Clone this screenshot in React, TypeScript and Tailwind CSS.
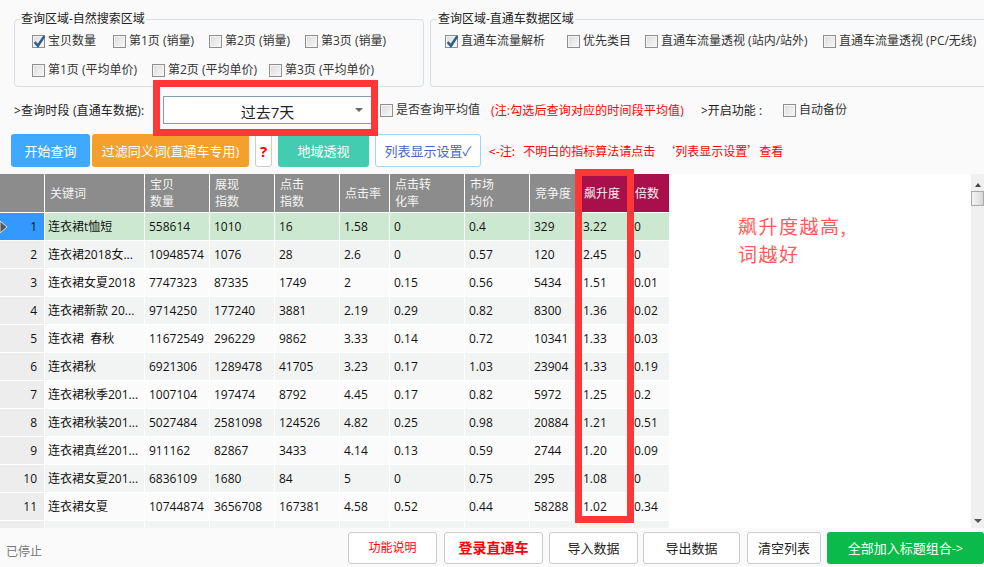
import type { ReactNode } from 'react'

const rows = [
  ['1', '连衣裙t恤短', '558614', '1010', '16', '1.58', '0', '0.4', '329', '3.22', '0'],
  ['2', '连衣裙2018女...', '10948574', '1076', '28', '2.6', '0', '0.57', '120', '2.45', '0'],
  ['3', '连衣裙女夏2018', '7747323', '87335', '1749', '2', '0.15', '0.56', '5434', '1.51', '0.01'],
  ['4', '连衣裙新款 20...', '9714250', '177240', '3881', '2.19', '0.29', '0.82', '8300', '1.36', '0.02'],
  ['5', '连衣裙  春秋', '11672549', '296229', '9862', '3.33', '0.14', '0.72', '10341', '1.33', '0.03'],
  ['6', '连衣裙秋', '6921306', '1289478', '41705', '3.23', '0.17', '1.03', '23904', '1.33', '0.19'],
  ['7', '连衣裙秋季201...', '1007104', '197474', '8792', '4.45', '0.17', '0.82', '5972', '1.25', '0.2'],
  ['8', '连衣裙秋装201...', '5027484', '2581098', '124526', '4.82', '0.25', '0.98', '20884', '1.21', '0.51'],
  ['9', '连衣裙真丝201...', '911162', '82867', '3433', '4.14', '0.13', '0.59', '2744', '1.20', '0.09'],
  ['10', '连衣裙女夏201...', '6836109', '1680', '84', '5', '0', '0.75', '295', '1.08', '0'],
  ['11', '连衣裙女夏', '10744874', '3656708', '167381', '4.58', '0.52', '0.44', '58288', '1.02', '0.34'],
  ['', '', '', '', '', '', '', '', '', '', ''],
]

const headers = ['', '关键词', '宝贝\n数量', '展现\n指数', '点击\n指数', '点击率', '点击转\n化率', '市场\n均价', '竞争度', '飙升度', '倍数']

const gridCols = 'grid grid-cols-[45px_100px_65px_65px_65px_50px_75px_65px_49px_54px_37px]'

function Check({ label, checked, className }: { label: string; checked?: boolean; className?: string }) {
  return (
    <div className={`flex h-4 items-center gap-[3px] whitespace-nowrap text-[#333] ${className ?? ''}`}>
      <span className="relative size-[13px] shrink-0 border border-[#8e8f8f] bg-gradient-to-br from-[#dcdcdc] to-[#f8f8f8] shadow-[inset_0_0_0_1px_#f4f4f4]">
        {checked && (
          <svg viewBox="0 0 14 14" className="absolute -left-px -top-[2px] size-[15px]">
            <path d="M2.5 7.5 L5.5 11 L11.5 2" fill="none" stroke="#2f5f8f" strokeWidth="2.4" />
          </svg>
        )}
      </span>
      <span>{label}</span>
    </div>
  )
}

function ActionButton({ children, className }: { children: ReactNode; className: string }) {
  return <button className={`flex items-center justify-center rounded-[3px] ${className}`}>{children}</button>
}

export default function App() {
  return (
    <div className="relative flex h-[567px] w-[984px] flex-col overflow-hidden bg-[#fafafa] font-['Open_Sans','Noto_Sans_CJK_SC',sans-serif] text-[12px] leading-4 text-[#222]">
      <div className="flex gap-[6px] pl-[14px] pt-[12px]">
        <fieldset className="h-[75px] w-[410px] rounded-[4px] border border-[#d6e0e6] pl-[17px]">
          <legend className="-ml-[12px] px-px leading-[14px] text-[#222]">查询区域-自然搜索区域</legend>
          <div className="flex pt-[7px]">
            <Check checked label="宝贝数量" className="w-[81px]" />
            <Check label="第1页 (销量)" className="w-[96px]" />
            <Check label="第2页 (销量)" className="w-[96px]" />
            <Check label="第3页 (销量)" />
          </div>
          <div className="flex pt-[13px]">
            <Check label="第1页 (平均单价)" className="w-[120px]" />
            <Check label="第2页 (平均单价)" className="w-[117px]" />
            <Check label="第3页 (平均单价)" />
          </div>
        </fieldset>
        <fieldset className="h-[75px] flex-1 rounded-l-[4px] border border-r-0 border-[#d6e0e6] pl-[14px]">
          <legend className="-ml-[8px] px-px leading-[14px] text-[#222]">查询区域-直通车数据区域</legend>
          <div className="flex pt-[7px]">
            <Check checked label="直通车流量解析" className="w-[122px]" />
            <Check label="优先类目" className="w-[78px]" />
            <Check label="直通车流量透视 (站内/站外)" className="w-[178px] text-[#111]" />
            <Check label="直通车流量透视 (PC/无线)" className="text-[#111]" />
          </div>
        </fieldset>
      </div>

      <div className="mt-[9px] flex h-7 items-center pl-[14px]">
        <span className="w-[149px] whitespace-nowrap pt-px tracking-[0.15px]">&gt;查询时段 (直通车数据):</span>
        <div className="relative flex h-7 w-[208px] items-center justify-center border border-r-0 border-[#7f9db9] bg-white pt-[3px] text-[15px] text-[#222]">
          过去7天
          <span className="absolute right-[8px] top-[11px] size-0 border-x-[4px] border-t-[4px] border-x-transparent border-t-[#666]" />
        </div>
        <Check label="是否查询平均值" className="ml-[9px] w-[111px]" />
        <span className="w-[210px] whitespace-nowrap pt-px tracking-[0.15px] text-[#ff0000]">(注:勾选后查询对应的时间段平均值)</span>
        <span className="w-[82px] whitespace-pre pt-px">{'>开启功能 :'}</span>
        <Check label="自动备份" />
      </div>

      <div className="mt-[10px] flex h-[33px] items-stretch pl-[11px] text-[13px] text-white">
        <ActionButton className="w-[79px] bg-[#3fa9ff]">开始查询</ActionButton>
        <ActionButton className="ml-[2px] w-[157px] bg-[#f5a02c]">过滤同义词(直通车专用)</ActionButton>
        <ActionButton className="ml-[6px] w-[17px] border border-[#ccc] bg-white text-[15px] font-bold text-[#ff0000]">?</ActionButton>
        <ActionButton className="ml-[6px] w-[91px] bg-[#43cdb0]">地域透视</ActionButton>
        <ActionButton className="ml-[6px] w-[106px] border border-[#a5d3f8] bg-white text-[#4a66c4]">列表显示设置✓</ActionButton>
        <span className="ml-2 self-center whitespace-pre font-['Noto_Sans_CJK_SC',sans-serif] text-[12px] text-[#ff0000]">
          {'<-注:   不明白的指标算法请点击   ‘列表显示设置’查看'}
        </span>
      </div>

      <div className="mt-[7px] flex h-[354px] overflow-hidden bg-white">
        <div className="w-[971px]">
          <div className={`${gridCols} h-[39px] w-[670px] leading-[17px] text-[#f4f4f4]`}>
            {headers.map((h, i) => (
              <div
                key={i}
                className={`flex items-center whitespace-pre-line border-b border-r border-white ${i === 10 ? 'pl-[2px]' : 'pl-[5px]'} ${i >= 9 ? 'bg-[#a90f4a]' : 'bg-[#8c8c8c]'}`}
              >
                {h}
              </div>
            ))}
          </div>
          {rows.map((row, r) => (
            <div key={r} className={`${gridCols} h-7 w-[670px] text-[#111]`}>
              {row.map((cell, c) => {
                const selected = r === 0
                const stripe = selected ? 'bg-[#cde8d0]' : r % 2 === 1 ? 'bg-[#f2f4f3]' : 'bg-[#fbfbfb]'
                if (c === 0) {
                  return (
                    <div
                      key={c}
                      className={`relative flex items-center justify-end border-b border-r border-white pr-[7px] ${selected ? 'bg-[#3399ff]' : 'bg-[#ededed]'}`}
                    >
                      {selected && (
                        <svg viewBox="0 0 8 12" className="absolute left-0 top-[8px] h-3 w-2">
                          <path d="M0 0 L7 6 L0 12 Z" fill="#555" stroke="#fff" strokeWidth="0.8" />
                        </svg>
                      )}
                      {cell}
                    </div>
                  )
                }
                return (
                  <div
                    key={c}
                    className={`flex items-center overflow-hidden whitespace-pre border-b border-r border-white ${c === 1 ? 'pl-[3px]' : c === 10 ? 'pl-px' : 'pl-1'} ${stripe}`}
                  >
                    {cell}
                  </div>
                )
              })}
            </div>
          ))}
        </div>
        <div className="flex w-[13px] flex-col items-center bg-[#f0f0f0]">
          <span className="mt-[9px] size-0 border-x-[3px] border-b-[4px] border-x-transparent border-b-[#444]" />
          <span className="mt-[4px] h-[15px] w-[13px] border border-[#aaa] bg-gradient-to-r from-[#f4f4f4] to-[#d8d8d8]" />
          <span className="mb-[5px] mt-auto size-0 border-x-[4px] border-t-[4px] border-x-transparent border-t-[#555]" />
        </div>
      </div>

      <div className="flex flex-1 items-start pt-1 text-[13px]">
        <span className="ml-[6px] mt-[12px] text-[12px] text-[#777]">已停止</span>
        <div className="ml-auto flex h-8">
          <ActionButton className="w-[89px] border border-[#ccc] bg-white text-[12px] text-[#ff0000]">功能说明</ActionButton>
          <ActionButton className="ml-[7px] w-[99px] border border-[#ccc] bg-white text-[14px] font-bold text-[#ff0000]">登录直通车</ActionButton>
          <ActionButton className="ml-[6px] w-[89px] border border-[#ccc] bg-white">导入数据</ActionButton>
          <ActionButton className="ml-[5px] w-[97px] border border-[#ccc] bg-white">导出数据</ActionButton>
          <ActionButton className="ml-[7px] w-[74px] border border-[#ccc] bg-white">清空列表</ActionButton>
          <ActionButton className="ml-[6px] w-[157px] bg-[#0abb4b] text-white">全部加入标题组合-&gt;</ActionButton>
        </div>
      </div>

      {/* annotations on top of the screenshot */}
      <div className="absolute left-[153px] top-[80px] h-[56px] w-[225px] border-[7px] border-[#ff3737]" />
      <div className="absolute left-[575px] top-[169px] h-[354px] w-[59px] border-[7px] border-[#ff3737]" />
      <div className="absolute left-[738px] top-[212px] font-['Noto_Sans_CJK_SC',sans-serif] text-[19px] leading-[28px] tracking-[1.5px] text-[#ff5a5a]">
        飙升度越高,
        <br />
        词越好
      </div>
    </div>
  )
}
